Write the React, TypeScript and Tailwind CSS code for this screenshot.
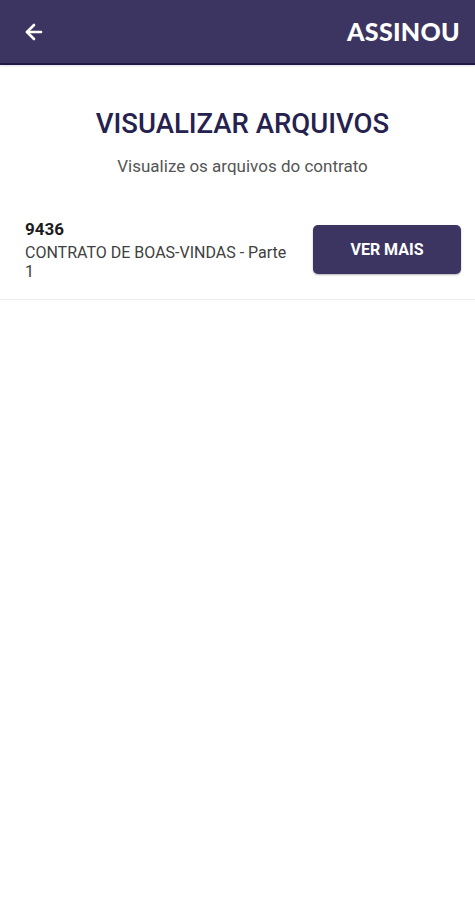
import { ArrowLeft } from "lucide-react";

type Arquivo = {
  id: string;
  nome: string;
};

const arquivos: Arquivo[] = [{ id: "9436", nome: "CONTRATO DE BOAS-VINDAS - Parte 1" }];

function Header() {
  return (
    <div className="flex h-[65px] items-center justify-between border-b-2 border-[#1f1a48] bg-[#3c3561] pl-[22px] pr-[15px] shadow-[0_1px_2px_rgba(0,0,0,0.12)]">
      <button className="flex h-8 w-8 items-center justify-start text-white">
        <ArrowLeft size={24} strokeWidth={2.6} />
      </button>
      <span className="font-['Lato'] text-[25px] font-black tracking-[0.3px] text-white">
        ASSINOU
      </span>
    </div>
  );
}

function ArquivoRow({ arquivo }: { arquivo: Arquivo }) {
  return (
    <div className="flex items-center border-b border-[#ececec] pl-[25px] pr-[14px] pt-[17px] pb-[18px]">
      <div className="flex-1 pr-4">
        <div className="text-[17px] font-bold leading-[22px] text-[#1c1c1c]">{arquivo.id}</div>
        <div className="mt-[3px] w-[266px] text-[16px] leading-[19px] text-[#404040]">
          {arquivo.nome}
        </div>
      </div>
      <button className="flex h-[49px] w-[148px] items-center justify-center rounded-[5px] bg-[#3c3561] text-[16px] font-bold text-white shadow-[0_1px_2px_rgba(0,0,0,0.3)]">
        VER MAIS
      </button>
    </div>
  );
}

export default function App() {
  return (
    <div className="h-[900px] w-full bg-white font-['Roboto',sans-serif]">
      <Header />
      <div className="flex flex-col items-center pl-[10px] pt-[42px]">
        <h1 className="text-[27.5px] font-medium leading-[34px] text-[#26224f]">
          VISUALIZAR ARQUIVOS
        </h1>
        <p className="mt-[15px] text-[17px] leading-[20px] text-[#555555]">
          Visualize os arquivos do contrato
        </p>
      </div>
      <div className="mt-[25px]">
        {arquivos.map((a) => (
          <ArquivoRow key={a.id} arquivo={a} />
        ))}
      </div>
    </div>
  );
}
